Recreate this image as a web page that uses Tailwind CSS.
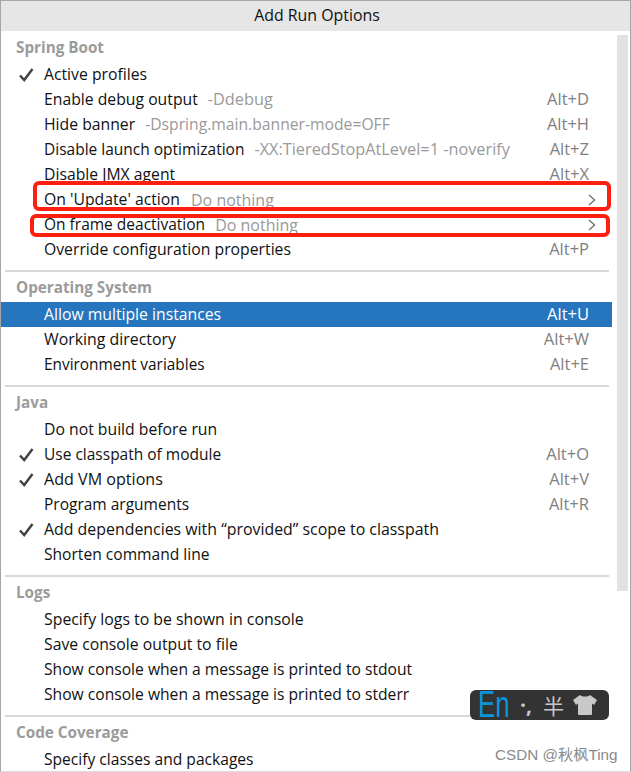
<!DOCTYPE html>
<html lang="en">
<head>
    <meta charset="UTF-8">
    <title>Add Run Options</title>
    <script src="https://cdn.jsdelivr.net/npm/@tailwindcss/browser@4"></script>
</head>
<body class="bg-white">
<div class="relative w-[631px] h-[772px] overflow-hidden font-['Open_Sans','Noto_Sans_CJK_SC',sans-serif] text-[15.75px] text-[#111] border border-[#a6a6a6] border-b-[#dedede]">
    <div class="h-[30px] bg-[#e6e6e6] flex items-center justify-center pl-[3px] pb-px text-[15.9px]">Add Run Options</div>

    <div class="flex">
        <div class="w-[611px] shrink-0 pt-px">
            <div class="h-[30px] pl-[15px] flex items-center font-bold text-[15.25px] text-[#9b9b9b]">Spring Boot</div>
            <div class="h-[25px] flex items-center pl-[43px] pr-[23px] relative">
                <svg class="absolute left-[18px] top-[6px]" width="15" height="14" viewBox="0 0 15 14"><path d="M1 7.5 L5.2 12 L13.5 1" fill="none" stroke="#444" stroke-width="2.5"/></svg>
                <span>Active profiles</span>
            </div>
            <div class="h-[25px] flex items-center pl-[43px] pr-[23px]"><span>Enable debug output</span><span class="ml-[10px] text-[16.3px] text-[#999]">-Ddebug</span><span class="ml-auto text-[16.5px] text-[#808080]">Alt+D</span></div>
            <div class="h-[25px] flex items-center pl-[43px] pr-[23px]"><span>Hide banner</span><span class="ml-[10px] text-[15.7px] text-[#999]">-Dspring.main.banner-mode=OFF</span><span class="ml-auto text-[16.5px] text-[#808080]">Alt+H</span></div>
            <div class="h-[25px] flex items-center pl-[43px] pr-[23px]"><span class="text-[15.5px]">Disable launch optimization</span><span class="ml-[10px] text-[16.3px] text-[#999]">-XX:TieredStopAtLevel=1 -noverify</span><span class="ml-auto text-[16.5px] text-[#808080]">Alt+Z</span></div>
            <div class="h-[25px] flex items-center pl-[43px] pr-[23px]"><span>Disable JMX agent</span><span class="ml-auto text-[16.5px] text-[#808080]">Alt+X</span></div>
            <div class="h-[25px] flex items-center pl-[43px] pr-[23px]"><span>On 'Update' action</span><span class="ml-[11px] text-[16px] text-[#999]">Do nothing</span>
                <svg class="ml-auto -mr-[7px]" width="8" height="12" viewBox="0 0 8 12"><path d="M1 1 L6.5 6 L1 11" fill="none" stroke="#777" stroke-width="1.5"/></svg>
            </div>
            <div class="h-[25px] flex items-center pl-[43px] pr-[23px]"><span class="text-[15.5px]">On frame deactivation</span><span class="ml-[10px] text-[16px] text-[#999]">Do nothing</span>
                <svg class="ml-auto -mr-[7px]" width="8" height="12" viewBox="0 0 8 12"><path d="M1 1 L6.5 6 L1 11" fill="none" stroke="#777" stroke-width="1.5"/></svg>
            </div>
            <div class="h-[25px] flex items-center pl-[43px] pr-[23px]"><span>Override configuration properties</span><span class="ml-auto text-[16.5px] text-[#808080]">Alt+P</span></div>
            <div class="h-[2px] bg-[#d9d9d9] mt-2 ml-1 mr-[3px]"></div>

            <div class="h-[30px] pl-[15px] flex items-center font-bold text-[15.25px] text-[#9b9b9b]">Operating System</div>
            <div class="h-[25px] flex items-center pl-[43px] pr-[23px] bg-[#2675bf] text-white"><span>Allow multiple instances</span><span class="ml-auto text-[16.5px]">Alt+U</span></div>
            <div class="h-[25px] flex items-center pl-[43px] pr-[23px]"><span class="text-[15.9px]">Working directory</span><span class="ml-auto text-[16.5px] text-[#808080]">Alt+W</span></div>
            <div class="h-[25px] flex items-center pl-[43px] pr-[23px]"><span class="text-[15.4px]">Environment variables</span><span class="ml-auto text-[16.5px] text-[#808080]">Alt+E</span></div>
            <div class="h-[2px] bg-[#d9d9d9] mt-2 ml-1 mr-[3px]"></div>

            <div class="h-[30px] pl-[15px] flex items-center font-bold text-[15.25px] text-[#9b9b9b]">Java</div>
            <div class="h-[25px] flex items-center pl-[43px] pr-[23px]"><span>Do not build before run</span></div>
            <div class="h-[25px] flex items-center pl-[43px] pr-[23px] relative">
                <svg class="absolute left-[18px] top-[6px]" width="15" height="14" viewBox="0 0 15 14"><path d="M1 7.5 L5.2 12 L13.5 1" fill="none" stroke="#444" stroke-width="2.5"/></svg>
                <span class="text-[15.5px]">Use classpath of module</span><span class="ml-auto text-[16.5px] text-[#808080]">Alt+O</span>
            </div>
            <div class="h-[25px] flex items-center pl-[43px] pr-[23px] relative">
                <svg class="absolute left-[18px] top-[6px]" width="15" height="14" viewBox="0 0 15 14"><path d="M1 7.5 L5.2 12 L13.5 1" fill="none" stroke="#444" stroke-width="2.5"/></svg>
                <span class="text-[16.1px]">Add VM options</span><span class="ml-auto text-[16.5px] text-[#808080]">Alt+V</span>
            </div>
            <div class="h-[25px] flex items-center pl-[43px] pr-[23px]"><span class="text-[15.5px]">Program arguments</span><span class="ml-auto text-[16.5px] text-[#808080]">Alt+R</span></div>
            <div class="h-[25px] flex items-center pl-[43px] pr-[23px] relative">
                <svg class="absolute left-[18px] top-[6px]" width="15" height="14" viewBox="0 0 15 14"><path d="M1 7.5 L5.2 12 L13.5 1" fill="none" stroke="#444" stroke-width="2.5"/></svg>
                <span class="text-[15.9px]">Add dependencies with “provided” scope to classpath</span>
            </div>
            <div class="h-[25px] flex items-center pl-[43px] pr-[23px]"><span class="text-[15.6px]">Shorten command line</span></div>
            <div class="h-[2px] bg-[#d9d9d9] mt-2 ml-1 mr-[3px]"></div>

            <div class="h-[30px] pl-[15px] flex items-center font-bold text-[15.25px] text-[#9b9b9b]">Logs</div>
            <div class="h-[25px] flex items-center pl-[43px] pr-[23px]"><span class="text-[15.85px]">Specify logs to be shown in console</span></div>
            <div class="h-[25px] flex items-center pl-[43px] pr-[23px]"><span>Save console output to file</span></div>
            <div class="h-[25px] flex items-center pl-[43px] pr-[23px]"><span class="text-[15.65px]">Show console when a message is printed to stdout</span></div>
            <div class="h-[25px] flex items-center pl-[43px] pr-[23px]"><span class="text-[15.65px]">Show console when a message is printed to stderr</span></div>
            <div class="h-[2px] bg-[#d9d9d9] mt-2 ml-1 mr-[3px]"></div>

            <div class="h-[30px] pl-[15px] flex items-center font-bold text-[15.25px] text-[#9b9b9b]">Code Coverage</div>
            <div class="h-[25px] flex items-center pl-[43px] pr-[23px]"><span class="text-[15.6px]">Specify classes and packages</span></div>
        </div>
        <div class="w-[11px] ml-[5px] mt-[4px] h-[556px] bg-[#e2e2e2]"></div>
    </div>

    <!-- red annotation boxes -->
    <div class="absolute left-[32px] top-[180px] w-[578px] h-[30px] border-[4px] border-[#ff1f0f] rounded-[6px]"></div>
    <div class="absolute left-[29px] top-[213px] w-[580px] h-[23px] border-[4px] border-[#ff1f0f] rounded-[6px]"></div>

    <!-- IME status bar -->
    <div class="absolute left-[469px] top-[689px] w-[139px] h-[30px] bg-[#333] rounded-[6px] flex items-center pl-[8px] text-[#c8c8c8]">
        <span class="w-[30px] text-[#0a96dc] text-[36px] leading-none origin-left scale-x-[.72] font-['Liberation_Sans',sans-serif]">En</span>
        <span class="ml-[12px] w-[23px] text-[21px] leading-none font-bold">·,</span>
        <span class="text-[21px] leading-none font-['Noto_Sans_CJK_SC',sans-serif]">半</span>
        <svg class="ml-[8px]" width="26" height="22" viewBox="0 0 26 22"><path d="M8 1 C10 3 16 3 18 1 L25 6 L22 11 L20 9.5 L20 20 Q20 21 19 21 L7 21 Q6 21 6 20 L6 9.5 L4 11 L1 6 Z" fill="#c8c8c8"/></svg>
    </div>

    <div class="absolute left-[494px] top-[743px] text-[15.25px] text-[#8a8a8a] font-['Liberation_Sans','Noto_Sans_CJK_SC',sans-serif]">CSDN @秋枫Ting</div>
</div>
</body>
</html>
